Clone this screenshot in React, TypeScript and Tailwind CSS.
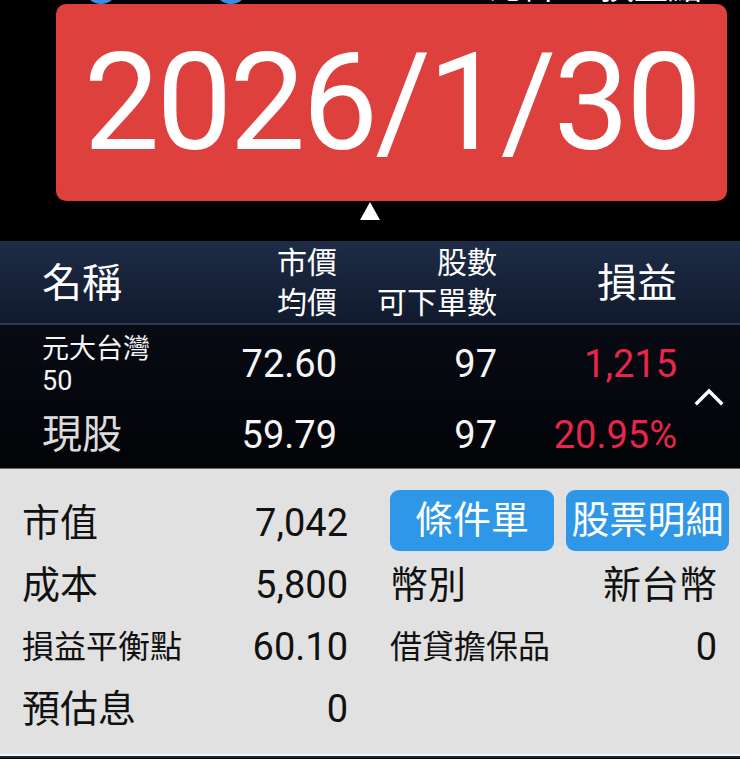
import React from "react";

const FONT = "font-['Roboto','Noto_Sans_CJK_TC',sans-serif]";

function Chevron() {
  return (
    <svg width="30" height="20" viewBox="0 0 30 20" className="block">
      <polyline points="3,17 15,5 27,17" fill="none" stroke="#ffffff" strokeWidth="3.5" strokeLinecap="square" />
    </svg>
  );
}

export default function App() {
  return (
    <div className={`w-[740px] h-[759px] overflow-hidden bg-black ${FONT}`}>
      {/* top chart area with tooltip */}
      <div className="relative h-[241px] bg-black">
        {/* content partially hidden behind the tooltip */}
        <div className="absolute left-[84px] top-[-56px] w-[34px] h-[60px] rounded-full bg-[#3a8fe0]" />
        <div className="absolute left-[214px] top-[-56px] w-[34px] h-[60px] rounded-full bg-[#3a8fe0]" />
        <div className="absolute left-[490px] top-[-30px] text-[34px] leading-[34px] text-white">總計</div>
        <div className="absolute left-[600px] top-[-30px] text-[34px] leading-[34px] text-white">損益點</div>

        <div className="absolute left-[56px] top-[4px] w-[671px] h-[197px] rounded-[10px] bg-[#dd403d] flex items-center justify-center">
          <span className="text-white text-[135px] leading-none tracking-[-3px] font-normal pt-[2px]">2026/1/30</span>
        </div>
        <svg className="absolute left-[360px] top-[202px]" width="20" height="18" viewBox="0 0 20 18">
          <polygon points="10,0 20,18 0,18" fill="#ffffff" />
        </svg>
      </div>

      {/* table header */}
      <div className="h-[84px] bg-gradient-to-b from-[#1e2c47] to-[#111a2d] border-b-2 border-[#2b3a54] grid grid-cols-[237px_100px_160px_180px] items-center text-white">
        <div className="pl-[42px] text-[40px] leading-none pt-[3px]">名稱</div>
        <div className="text-right text-[30px] leading-[40px] pt-[2px]">
          <div>市價</div>
          <div>均價</div>
        </div>
        <div className="text-right text-[30px] leading-[40px] pt-[2px]">
          <div>股數</div>
          <div>可下單數</div>
        </div>
        <div className="text-right text-[40px] leading-none pt-[3px]">損益</div>
      </div>

      {/* rows */}
      <div className="relative h-[144px] bg-gradient-to-b from-[#080b14] to-[#030407] border-b border-[#6a6a6a]">
        <div className="h-[72px] pt-[6px] grid grid-cols-[237px_100px_160px_180px] items-center text-[#f5f5f5]">
          <div className="pl-[42px] text-[27px] leading-[32px] pt-[2px]">
            <div>元大台灣</div>
            <div>50</div>
          </div>
          <div className="text-right text-[38px] leading-none">72.60</div>
          <div className="text-right text-[38px] leading-none">97</div>
          <div className="text-right text-[38px] leading-none text-[#e8264b]">1,215</div>
        </div>
        <div className="h-[72px] pt-[4px] grid grid-cols-[237px_100px_160px_180px] items-center text-[#f5f5f5]">
          <div className="pl-[42px] text-[40px] leading-none text-[#dcdcdc]">現股</div>
          <div className="text-right text-[38px] leading-none">59.79</div>
          <div className="text-right text-[38px] leading-none">97</div>
          <div className="text-right text-[38px] leading-none text-[#e8264b]">20.95%</div>
        </div>
        <div className="absolute left-[694px] top-[61px]">
          <Chevron />
        </div>
      </div>

      {/* detail panel */}
      <div className="h-[287px] bg-[#e1e1e1] border-b-2 border-[#f2f6fa] flex pt-[23px] pl-[22px] text-[#111111]">
        <div className="w-[326px] flex flex-col">
          <div className="h-[62px] flex items-center justify-between">
            <span className="text-[38px] leading-none">市值</span>
            <span className="text-[38px] leading-none">7,042</span>
          </div>
          <div className="h-[62px] flex items-center justify-between">
            <span className="text-[38px] leading-none">成本</span>
            <span className="text-[38px] leading-none">5,800</span>
          </div>
          <div className="h-[62px] flex items-center justify-between">
            <span className="text-[32px] leading-none">損益平衡點</span>
            <span className="text-[38px] leading-none">60.10</span>
          </div>
          <div className="h-[62px] flex items-center justify-between">
            <span className="text-[38px] leading-none">預估息</span>
            <span className="text-[38px] leading-none">0</span>
          </div>
        </div>
        <div className="ml-[42px] w-[339px] flex flex-col">
          <div className="h-[62px] flex items-center gap-[12px] -mt-[3px]">
            <div className="w-[164px] h-[61px] rounded-[9px] bg-[#2e97e8] flex items-center justify-center text-white text-[38px] leading-none">條件單</div>
            <div className="w-[163px] h-[61px] rounded-[9px] bg-[#2e97e8] flex items-center justify-center text-white text-[38px] leading-none">股票明細</div>
          </div>
          <div className="h-[62px] flex items-center justify-between pr-[12px] mt-[3px]">
            <span className="text-[38px] leading-none">幣別</span>
            <span className="text-[38px] leading-none">新台幣</span>
          </div>
          <div className="h-[62px] flex items-center justify-between pr-[12px]">
            <span className="text-[32px] leading-none">借貸擔保品</span>
            <span className="text-[38px] leading-none">0</span>
          </div>
        </div>
      </div>
      <div className="h-[2px] bg-[#1b2633]" />
    </div>
  );
}
